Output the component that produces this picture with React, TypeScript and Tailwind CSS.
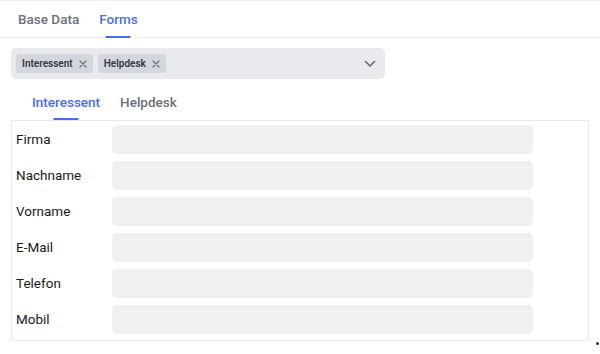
import React from "react";

const fields = ["Firma", "Nachname", "Vorname", "E-Mail", "Telefon", "Mobil"];

function Chip({ label }: { label: string }) {
  return (
    <div className="flex h-[19px] items-center gap-[6px] rounded-[3px] bg-[#d3d6dc] pl-[6px] pr-[6px] text-[10px] font-semibold text-[#333a45]">
      <span>{label}</span>
      <svg width="8" height="8" viewBox="0 0 8 8" className="text-[#6b717b]">
        <path d="M1 1L7 7M7 1L1 7" stroke="currentColor" strokeWidth="1.2" strokeLinecap="round" />
      </svg>
    </div>
  );
}

export default function App() {
  return (
    <div className="relative h-[354px] w-[600px] overflow-hidden bg-white" style={{ fontFamily: "Roboto, 'Liberation Sans', sans-serif" }}>
      <div className="flex h-[38px] items-stretch gap-[20px] border-b border-t border-[#eeeff1] pl-[18px] text-[13.5px] font-medium">
        <div className="flex items-center text-[#6b7079]">Base Data</div>
        <div className="relative flex items-center text-[#4a6cf0]">
          Forms
          <div className="absolute bottom-[-1px] left-1/2 h-[2px] w-[25px] -translate-x-1/2 bg-[#4a6cf0]" />
        </div>
      </div>

      <div className="ml-[11px] mt-[10px] flex h-[31px] w-[374px] items-center gap-[5px] rounded-[5px] bg-[#e9eaee] pl-[5px] pr-[9px]">
        <Chip label="Interessent" />
        <Chip label="Helpdesk" />
        <div className="flex-1" />
        <svg width="12" height="8" viewBox="0 0 12 8">
          <path d="M1.5 1.5L6 6L10.5 1.5" fill="none" stroke="#5f6570" strokeWidth="1.5" strokeLinecap="round" strokeLinejoin="round" />
        </svg>
      </div>

      <div className="mt-[5px] flex h-[36px] gap-[20px] pl-[32px] text-[13.5px] font-medium">
        <div className="relative flex items-center text-[#4a6cf0]">
          Interessent
          <div className="absolute bottom-[0px] left-1/2 h-[2px] w-[25px] -translate-x-1/2 bg-[#4a6cf0]" />
        </div>
        <div className="flex items-center text-[#6b7079]">Helpdesk</div>
      </div>

      <div className="ml-[11px] flex w-[578px] flex-col gap-[7px] border border-[#e8e9eb] pb-[6px] pl-[4px] pt-[4px]">
        {fields.map((f) => (
          <div key={f} className="flex h-[29px] items-center">
            <div className="w-[96px] text-[13.5px] text-[#1a1a1a]">{f}</div>
            <div className="h-[29px] w-[421px] rounded-[5px] bg-[#f0f0f0]" />
          </div>
        ))}
      </div>

      <div className="absolute left-[596px] top-[342px] h-[3px] w-[3px] rounded-full bg-[#333]" />
    </div>
  );
}
